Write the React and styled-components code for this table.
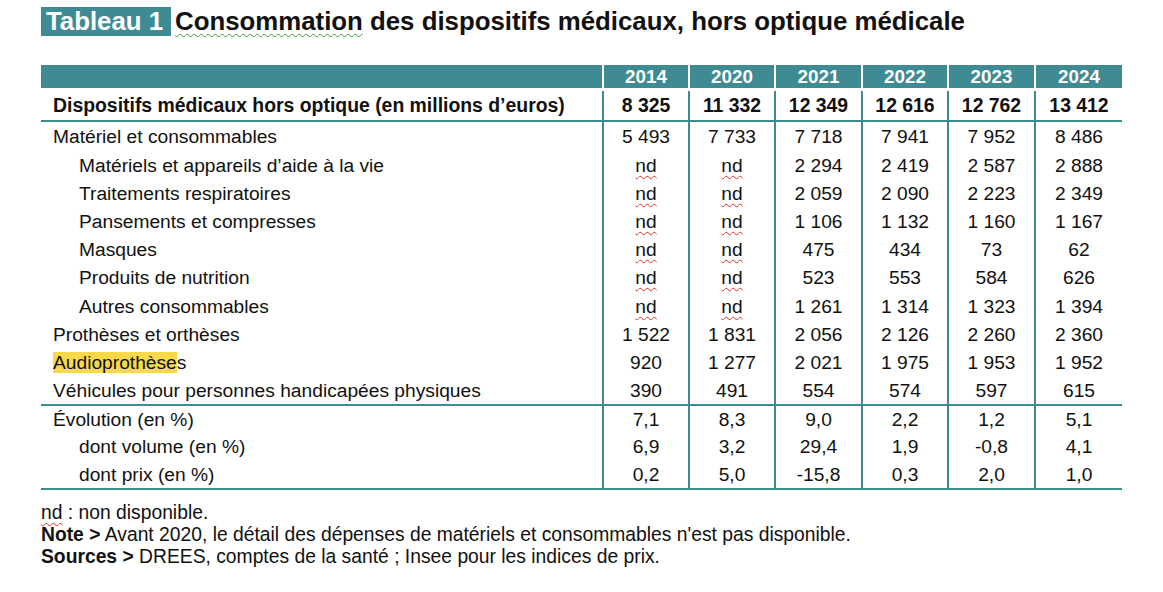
import React from 'react';
import styled, { createGlobalStyle } from 'styled-components';

const TEAL = '#3f8b93';

const GlobalStyle = createGlobalStyle`
  html, body {
    margin: 0;
    padding: 0;
    background: #ffffff;
  }
  body {
    font-family: "Liberation Sans", Arial, sans-serif;
    color: #111;
  }
`;

const Page = styled.div`
  padding: 7px 41px 0 41px;
  width: 1081px;
`;

const TitleLine = styled.h1`
  margin: 0;
  display: flex;
  align-items: center;
  gap: 4px;
  font-size: 25.8px;
  font-weight: bold;
  line-height: 29px;
  white-space: nowrap;
`;

const TitleTag = styled.span`
  background: ${TEAL};
  color: #fff;
  padding: 0 8px 0 5px;
`;

const Squiggle = styled.span`
  text-decoration: underline wavy ${(p) => p.$color || '#e0302a'};
  text-decoration-thickness: 1px;
  text-underline-offset: 3px;
`;

const Table = styled.table`
  margin-top: 29px;
  width: 1081px;
  border-collapse: collapse;
  table-layout: fixed;
  font-size: 19.2px;
`;

const HeadRow = styled.tr`
  background: ${TEAL};
  border-bottom: 3px solid #fff;
`;

const YearCell = styled.th`
  height: 23px;
  padding: 0;
  color: #fff;
  font-weight: bold;
  font-size: 18.8px;
  text-align: center;
  border-left: 2px solid #fff;
  line-height: 20px;
`;

const BlankHead = styled.th`
  padding: 0;
`;

const Row = styled.tr`
  border-bottom: ${(p) => (p.$line ? `2px solid ${TEAL}` : 'none')};
  font-weight: ${(p) => (p.$bold ? 'bold' : 'normal')};
  font-size: ${(p) => (p.$bold ? '19.4px' : 'inherit')};
  & > td {
    height: ${(p) => p.$h || 28}px;
  }
`;

const Label = styled.td`
  padding: 0 0 0 ${(p) => (p.$sub ? 38 : 12)}px;
  white-space: nowrap;
`;

const Value = styled.td`
  padding: 0;
  text-align: center;
  border-left: 2px solid ${TEAL};
`;

const Highlight = styled.span`
  background: #f8d94a;
`;

const Notes = styled.div`
  margin-top: 12px;
  font-size: 19.3px;
  line-height: 22px;
  white-space: nowrap;
`;

const years = ['2014', '2020', '2021', '2022', '2023', '2024'];

const rows = [
  { label: 'Matériel et consommables', values: ['5 493', '7 733', '7 718', '7 941', '7 952', '8 486'], h: 29 },
  { label: 'Matériels et appareils d’aide à la vie', sub: true, values: ['nd', 'nd', '2 294', '2 419', '2 587', '2 888'], h: 29 },
  { label: 'Traitements respiratoires', sub: true, values: ['nd', 'nd', '2 059', '2 090', '2 223', '2 349'] },
  { label: 'Pansements et compresses', sub: true, values: ['nd', 'nd', '1 106', '1 132', '1 160', '1 167'] },
  { label: 'Masques', sub: true, values: ['nd', 'nd', '475', '434', '73', '62'] },
  { label: 'Produits de nutrition', sub: true, values: ['nd', 'nd', '523', '553', '584', '626'] },
  { label: 'Autres consommables', sub: true, values: ['nd', 'nd', '1 261', '1 314', '1 323', '1 394'], h: 29 },
  { label: 'Prothèses et orthèses', values: ['1 522', '1 831', '2 056', '2 126', '2 260', '2 360'] },
  { label: 'audio', values: ['920', '1 277', '2 021', '1 975', '1 953', '1 952'] },
  { label: 'Véhicules pour personnes handicapées physiques', values: ['390', '491', '554', '574', '597', '615'], line: true, h: 27 },
  { label: 'Évolution (en %)', values: ['7,1', '8,3', '9,0', '2,2', '1,2', '5,1'], h: 27 },
  { label: 'dont volume (en %)', sub: true, values: ['6,9', '3,2', '29,4', '1,9', '-0,8', '4,1'] },
  { label: 'dont prix (en %)', sub: true, values: ['0,2', '5,0', '-15,8', '0,3', '2,0', '1,0'], line: true, h: 27 },
];

const renderLabel = (label) => {
  if (label === 'audio') {
    return (
      <>
        <Highlight>Audioprothèse</Highlight>s
      </>
    );
  }
  return label;
};

const renderValue = (v) => (v === 'nd' ? <Squiggle>nd</Squiggle> : v);

export default function App() {
  return (
    <Page>
      <GlobalStyle />
      <TitleLine>
        <TitleTag>Tableau 1</TitleTag>
        <span>
          <Squiggle $color="#3aa03a">Consommation</Squiggle> des dispositifs médicaux, hors optique médicale
        </span>
      </TitleLine>

      <Table>
        <colgroup>
          <col style={{ width: '562px' }} />
          <col style={{ width: '86px' }} />
          <col style={{ width: '86px' }} />
          <col style={{ width: '87px' }} />
          <col style={{ width: '86px' }} />
          <col style={{ width: '87px' }} />
          <col style={{ width: '87px' }} />
        </colgroup>
        <thead>
          <HeadRow>
            <BlankHead />
            {years.map((y) => (
              <YearCell key={y}>{y}</YearCell>
            ))}
          </HeadRow>
        </thead>
        <tbody>
          <Row $bold $line $h={29}>
            <Label>Dispositifs médicaux hors optique (en millions d’euros)</Label>
            {['8 325', '11 332', '12 349', '12 616', '12 762', '13 412'].map((v) => (
              <Value key={v}>{v}</Value>
            ))}
          </Row>
          {rows.map((r) => (
            <Row key={r.label} $line={r.line} $h={r.h}>
              <Label $sub={r.sub}>{renderLabel(r.label)}</Label>
              {r.values.map((v, i) => (
                <Value key={i}>{renderValue(v)}</Value>
              ))}
            </Row>
          ))}
        </tbody>
      </Table>

      <Notes>
        <div>
          <Squiggle>nd</Squiggle> : non disponible.
        </div>
        <div>
          <b>Note &gt;</b> Avant 2020, le détail des dépenses de matériels et consommables n'est pas disponible.
        </div>
        <div>
          <b>Sources &gt;</b> DREES, comptes de la santé ; Insee pour les indices de prix.
        </div>
      </Notes>
    </Page>
  );
}
